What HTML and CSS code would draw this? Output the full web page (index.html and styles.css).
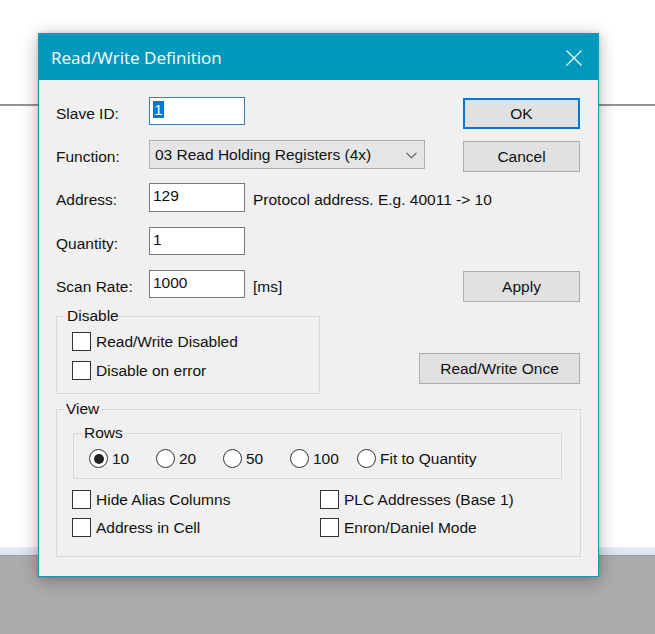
FILE: index.html
```html
<!DOCTYPE html>
<html>
<head>
<meta charset="utf-8">
<title>Read/Write Definition</title>
<link rel="stylesheet" href="styles.css">
</head>
<body>
<div class="desktop">
  <div class="top-area"></div>
  <div class="rule"></div>
  <div class="work-area"></div>
  <div class="strip"></div>
  <div class="gray-area"></div>

  <div class="dialog">
    <div class="titlebar">
      <span class="title">Read/Write Definition</span>
      <svg class="close" width="16" height="16" viewBox="0 0 16 16"><path d="M0.5 0.5 L15.5 15.5 M15.5 0.5 L0.5 15.5" stroke="#fff" stroke-width="1.1" fill="none"/></svg>
    </div>
    <div class="body">
      <div class="row r1">
        <span class="lbl">Slave ID:</span>
        <div class="edit focus"><span class="sel">1</span></div>
        <div class="btn default">OK</div>
      </div>
      <div class="row r2">
        <span class="lbl">Function:</span>
        <div class="combo">
          <span class="combo-text">03 Read Holding Registers (4x)</span>
          <svg class="chev" width="11" height="7" viewBox="0 0 11 7"><path d="M0.5 0.8 L5.5 5.8 L10.5 0.8" stroke="#555" stroke-width="1.1" fill="none"/></svg>
        </div>
        <div class="btn">Cancel</div>
      </div>
      <div class="row r3">
        <span class="lbl">Address:</span>
        <div class="edit">129</div>
        <span class="note">Protocol address. E.g. 40011 -&gt; 10</span>
      </div>
      <div class="row r4">
        <span class="lbl">Quantity:</span>
        <div class="edit">1</div>
      </div>
      <div class="row r5">
        <span class="lbl">Scan Rate:</span>
        <div class="edit">1000</div>
        <span class="note">[ms]</span>
        <div class="btn">Apply</div>
      </div>
      <div class="group-row">
        <fieldset class="group disable">
          <legend>Disable</legend>
          <div class="check"><span class="box"></span>Read/Write Disabled</div>
          <div class="check"><span class="box"></span>Disable on error</div>
        </fieldset>
        <div class="btn wide">Read/Write Once</div>
      </div>
      <fieldset class="group view">
        <legend>View</legend>
        <fieldset class="group rows">
          <legend>Rows</legend>
          <div class="radios">
            <div class="radio on"><span class="circle"></span>10</div>
            <div class="radio"><span class="circle"></span>20</div>
            <div class="radio"><span class="circle"></span>50</div>
            <div class="radio"><span class="circle"></span>100</div>
            <div class="radio"><span class="circle"></span>Fit to Quantity</div>
          </div>
        </fieldset>
        <div class="checks">
          <div class="check"><span class="box"></span>Hide Alias Columns</div>
          <div class="check"><span class="box"></span>PLC Addresses (Base 1)</div>
          <div class="check"><span class="box"></span>Address in Cell</div>
          <div class="check"><span class="box"></span>Enron/Daniel Mode</div>
        </div>
      </fieldset>
    </div>
  </div>
</div>
</body>
</html>
```

FILE: styles.css
```css
* { box-sizing: border-box; }
html, body { margin: 0; padding: 0; }
body {
  width: 655px;
  height: 634px;
  overflow: hidden;
  font-family: "Liberation Sans", Arial, sans-serif;
  font-size: 15.5px;
  color: #111;
}
.desktop {
  position: relative;
  width: 655px;
  height: 634px;
  display: flex;
  flex-direction: column;
  background: #fff;
}
.top-area { height: 104px; background: #fff; }
.rule { height: 2px; background: #949494; }
.work-area { flex: 1; background: #fff; }
.strip {
  height: 9px;
  background: linear-gradient(#e6edf6, #d6e1ee);
  border-bottom: 1px solid #9c9c9c;
}
.gray-area { height: 78px; background: #ababab; }

.dialog {
  position: absolute;
  left: 38px;
  top: 33px;
  width: 561px;
  background: #f0f0f0;
  border: 1px solid #1596bd;
  box-shadow: 0 3px 16px rgba(0,0,0,0.32), 0 0 3px rgba(0,0,0,0.12);
}
.titlebar {
  height: 46px;
  background: #0099bc;
  display: flex;
  align-items: center;
  padding: 0 16px 0 12px;
}
.title {
  font-family: "Open Sans", "Noto Sans", sans-serif;
  font-size: 17px;
  color: #fff;
  flex: 1;
  padding-top: 1px;
}
.close { display: block; margin-top: 1px; }

.body { padding: 17px 18px 19px 17px; }
.row {
  display: flex;
  align-items: flex-start;
}
.r1, .r2, .r4 { height: 43px; }
.r3 { height: 44px; }
.r5 { height: 37px; }
.lbl {
  width: 93px;
  line-height: 29px;
  padding-top: 2px;
  white-space: nowrap;
}
.edit {
  width: 96px;
  height: 28px;
  background: #fff;
  border: 1px solid #7a7a7a;
  padding: 2px 3px;
  line-height: 20px;
}
.r3 .edit { height: 29px; }
.edit.focus { border-color: #3c7fb1; }
.sel {
  display: inline-block;
  background: #0078d7;
  color: #fff;
  line-height: 17px;
  margin-top: 1px;
  padding: 0 1px;
}
.note {
  margin-left: 8px;
  line-height: 29px;
  padding-top: 2px;
  white-space: nowrap;
}
.combo {
  width: 276px;
  height: 29px;
  background: #e5e5e5;
  border: 1px solid #adadad;
  display: flex;
  align-items: center;
  padding: 1px 6px 0 5px;
}
.combo-text { flex: 1; white-space: nowrap; }
.chev { display: block; margin-right: 1px; }

.btn {
  margin-left: auto;
  margin-top: 1px;
  width: 117px;
  height: 31px;
  background: #e1e1e1;
  border: 1px solid #adadad;
  display: flex;
  align-items: center;
  justify-content: center;
  padding-top: 1px;
  white-space: nowrap;
}
.btn.default { border: 2px solid #0078d7; }
.btn.wide { width: 161px; margin-top: 46px; }

.group-row {
  display: flex;
  align-items: flex-start;
  height: 93px;
}
.group {
  margin: 0;
  border: 1px solid #d8d8d8;
  min-width: 0;
}
.group legend {
  line-height: 18px;
  padding: 0 2px;
  white-space: nowrap;
}
.disable {
  width: 264px;
  padding: 7px 0 13px 15px;
}
.disable legend { margin-left: -7px; }

.check {
  display: flex;
  align-items: center;
  height: 19px;
  white-space: nowrap;
}
.disable .check + .check { margin-top: 10px; }
.box {
  width: 19px;
  height: 19px;
  border: 1px solid #333;
  background: #fff;
  margin-right: 5px;
  flex: none;
}

.view {
  margin-right: -1px;
  padding: 6px 18px 19px 15px;
}
.view legend { margin-left: -8px; }
.rows {
  margin-left: 1px;
  padding: 7px 0 10px 15px;
}
.rows legend { margin-left: -7px; }
.radios { display: flex; }
.radio {
  display: flex;
  align-items: center;
  height: 19px;
  width: 67px;
  white-space: nowrap;
}
.radio:last-child { width: auto; }
.circle {
  width: 19px;
  height: 19px;
  border: 1px solid #333;
  border-radius: 50%;
  background: #fff;
  margin-right: 4px;
  flex: none;
  display: flex;
  align-items: center;
  justify-content: center;
}
.radio.on .circle::after {
  content: "";
  width: 10px;
  height: 10px;
  border-radius: 50%;
  background: #222;
}
.checks {
  margin-top: 11px;
  display: grid;
  grid-template-columns: 248px 1fr;
  row-gap: 9px;
}
```
